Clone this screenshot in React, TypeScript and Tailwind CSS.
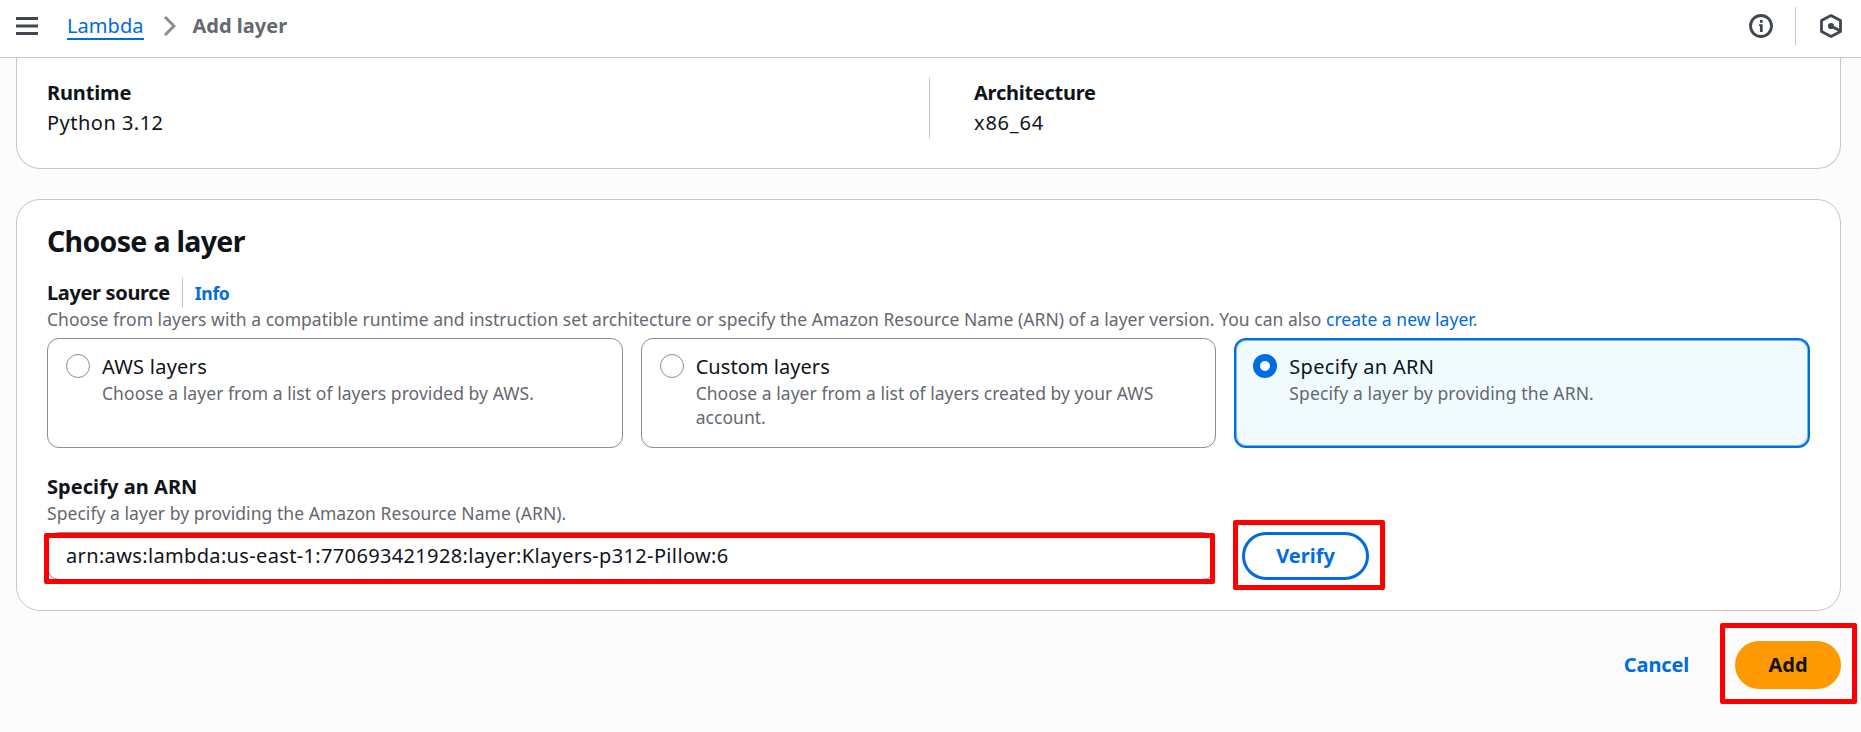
import type { ReactNode } from "react";

function MenuIcon() {
  return (
    <svg width="22" height="20" viewBox="0 0 22 20" fill="#424650">
      <rect x="0" y="1" width="22" height="3" />
      <rect x="0" y="8.5" width="22" height="3" />
      <rect x="0" y="16" width="22" height="3" />
    </svg>
  );
}

function ChevronIcon() {
  return (
    <svg width="12" height="20" viewBox="0 0 12 20" fill="none" stroke="#8c8c94" strokeWidth="3">
      <path d="M1 1l9 9-9 9" />
    </svg>
  );
}

function InfoIcon() {
  return (
    <svg width="24" height="24" viewBox="0 0 24 24" fill="none" stroke="#424650" strokeWidth="2.8">
      <circle cx="12" cy="12" r="10.5" />
      <path d="M12.3 10.5v7.5" />
      <path d="M12.3 6v2.8" />
      <path d="M10 11.2h3" strokeWidth="1.6" />
    </svg>
  );
}

function HexIcon() {
  return (
    <svg width="22" height="24" viewBox="0 0 22 24" fill="none" stroke="#424650" strokeWidth="2.8">
      <path d="M11 1.6L20.5 6.6V17.4L11 22.4L1.5 17.4V6.6Z" strokeLinejoin="round" />
      <path d="M11 12l9.5 5" />
      <circle cx="11" cy="12" r="3.1" fill="#424650" stroke="none" />
    </svg>
  );
}

function Radio({ checked }: { checked?: boolean }) {
  return checked ? (
    <span className="mt-[3px] flex h-6 w-6 shrink-0 items-center justify-center rounded-full bg-[#006ce0]">
      <span className="h-[10px] w-[10px] rounded-full bg-white" />
    </span>
  ) : (
    <span className="mt-[3px] h-6 w-6 shrink-0 rounded-full border-[1.5px] border-[#8c8c94] bg-white" />
  );
}

function Option({ label, checked, children }: { label: ReactNode; checked?: boolean; children: ReactNode }) {
  return (
    <div
      className={
        checked
          ? "flex gap-3 rounded-xl border-2 border-[#006ce0] bg-[#f0fbff] px-[17px] pt-[11px] shadow-[inset_0_0_0_1px_#7fb5ef]"
          : "flex gap-3 rounded-xl border border-[#8c8c94] px-[18px] pt-3"
      }
    >
      <Radio checked={checked} />
      <div>
        <div className="pt-px leading-[29px]">{label}</div>
        <div className="text-[17.5px] leading-6 text-[#656871]">{children}</div>
      </div>
    </div>
  );
}

export default function App() {
  return (
    <div className="h-[732px] overflow-hidden bg-[#fcfcfd] font-['Noto_Sans',sans-serif] text-[20px] leading-[30px] text-[#0f141a]">
      <header className="flex h-[58px] items-center border-b border-[#c6c6cd] bg-white pr-[19px] pb-[5px] pl-4">
        <MenuIcon />
        <nav className="ml-[29px] flex items-center">
          <a className="mb-px h-[29px] border-b-2 border-[#006ce0] text-[#006ce0] tracking-[0.05px]">Lambda</a>
          <span className="ml-5">
            <ChevronIcon />
          </span>
          <span className="ml-[17px] font-bold text-[#656871]">Add layer</span>
        </nav>
        <div className="ml-auto flex items-center">
          <InfoIcon />
          <span className="mr-6 ml-[22px] h-[38px] w-px bg-[#c6c6cd]" />
          <HexIcon />
        </div>
      </header>

      <main className="pr-5 pl-4">
        <section className="flex h-[111px] rounded-b-[24px] border border-t-0 border-[#c6c6cd] bg-white px-[30px] pt-5">
          <div className="w-[882px]">
            <div className="font-bold tracking-[-0.15px]">Runtime</div>
            <div className="tracking-[0.48px]">Python 3.12</div>
          </div>
          <div className="h-[60px] border-l border-[#c6c6cd] pl-11">
            <div className="font-bold tracking-[-0.25px]">Architecture</div>
            <div className="tracking-[0.8px]">x86_64</div>
          </div>
        </section>

        <section className="mt-[30px] h-[412px] rounded-[24px] border border-[#c6c6cd] bg-white px-[30px] pt-[23px]">
          <h2 className="text-[28.5px] leading-9 font-bold tracking-[-0.68px]">Choose a layer</h2>
          <div className="mt-[19px] flex h-[29px] items-start">
            <span className="font-bold tracking-[-0.35px]">Layer source</span>
            <span className="ml-3 h-[30px] border-l border-[#c6c6cd] pl-3 text-[17.5px] font-bold tracking-[-0.3px] text-[#006ce0]">
              Info
            </span>
          </div>
          <p className="text-[17.5px] leading-6 tracking-[0.03px] text-[#656871]">
            Choose from layers with a compatible runtime and instruction set architecture or specify the Amazon Resource
            Name (ARN) of a layer version. You can also <a className="text-[#006ce0]">create a new layer</a>.
          </p>
          <div className="mt-[7px] grid h-[110px] w-[1763px] grid-cols-3 gap-[18px]">
            <Option label={<span className="tracking-[0.25px]">AWS layers</span>}>
              <span className="tracking-[0.06px]">Choose a layer from a list of layers provided by AWS.</span>
            </Option>
            <Option label={<span className="tracking-[0.05px]">Custom layers</span>}>
              <span className="tracking-[0.04px]">
                Choose a layer from a list of layers created by your AWS
                <br />
                account.
              </span>
            </Option>
            <Option label={<span className="tracking-[0.3px]">Specify an ARN</span>} checked>
              <span className="tracking-[0.12px]">Specify a layer by providing the ARN.</span>
            </Option>
          </div>
          <div className="mt-[23px] pt-px leading-[29px] font-bold tracking-[0.05px]">Specify an ARN</div>
          <p className="text-[17.5px] leading-6 tracking-[0.05px] text-[#656871]">
            Specify a layer by providing the Amazon Resource Name (ARN).
          </p>
          <div className="mt-[7px] flex gap-[27px]">
            <div className="relative h-12 w-[1168px] rounded-xl border border-[#8c8c94] px-[18px] pt-2 tracking-[0.35px]">
              arn:aws:lambda:us-east-1:770693421928:layer:Klayers-p312-Pillow:6
              <span className="absolute top-0 -right-[1px] -bottom-[5px] -left-[4px] rounded-[2px] border-[5px] border-[#ff0000]" />
            </div>
            <div className="relative flex h-12 w-[127px] items-center justify-center rounded-full border-[3px] border-[#006ce0] font-bold text-[#006ce0]">
              Verify
              <span className="absolute -top-[15px] -right-[19px] -bottom-[13px] -left-[12px] rounded-[2px] border-[5px] border-[#ff0000]" />
            </div>
          </div>
        </section>

        <div className="mt-[30px] flex items-center justify-end font-bold">
          <a className="mr-[46px] tracking-[-0.15px] text-[#006ce0]">Cancel</a>
          <div className="relative flex h-12 w-[106px] items-center justify-center rounded-full bg-[#ff9900]">
            Add
            <span className="absolute -top-[18px] -right-4 -bottom-[15px] -left-[15px] rounded-[2px] border-[5px] border-[#ff0000]" />
          </div>
        </div>
      </main>
    </div>
  );
}
